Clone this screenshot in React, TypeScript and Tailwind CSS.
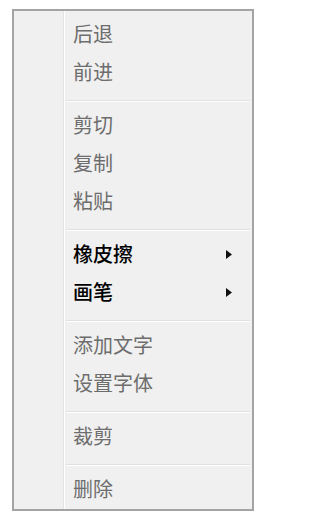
import React from "react"

type Entry =
  | { kind: "item"; label: string; disabled?: boolean; submenu?: boolean }
  | { kind: "sep" }

const entries: Entry[] = [
  { kind: "item", label: "后退", disabled: true },
  { kind: "item", label: "前进", disabled: true },
  { kind: "sep" },
  { kind: "item", label: "剪切", disabled: true },
  { kind: "item", label: "复制", disabled: true },
  { kind: "item", label: "粘贴", disabled: true },
  { kind: "sep" },
  { kind: "item", label: "橡皮擦", submenu: true },
  { kind: "item", label: "画笔", submenu: true },
  { kind: "sep" },
  { kind: "item", label: "添加文字", disabled: true },
  { kind: "item", label: "设置字体", disabled: true },
  { kind: "sep" },
  { kind: "item", label: "裁剪", disabled: true },
  { kind: "sep" },
  { kind: "item", label: "删除", disabled: true },
]

function Arrow() {
  return (
    <svg width="6" height="9" viewBox="0 0 6 9" className="block">
      <path d="M0 0 L6 4.5 L0 9 Z" fill="#111" />
    </svg>
  )
}

export default function App() {
  return (
    <div
      className="w-[263px] h-[517px] bg-white pt-[9px] pl-[12px]"
      style={{ fontFamily: '"Noto Sans CJK SC", "Noto Sans", sans-serif' }}
    >
      <div className="w-[242px] h-[502px] border-2 border-[#a4a4a4] bg-[#f0f0f0] flex">
        {/* icon gutter */}
        <div className="w-[49px] shrink-0" />
        <div className="w-px bg-[#e2e3e3] shrink-0" />
        <div className="w-px bg-white shrink-0" />

        <div className="flex-1 flex flex-col pt-[4px]">
          {entries.map((e, i) =>
            e.kind === "sep" ? (
              <div key={i} className="h-[15px] pt-[9px] pl-[1px] pr-[2px]">
                <div className="h-px bg-[#e0e0e0]" />
                <div className="h-px bg-white" />
              </div>
            ) : (
              <div
                key={i}
                className="h-[38px] flex items-center justify-between pl-[8px] pr-[20px]"
              >
                <span
                  className={
                    e.disabled
                      ? "text-[20px] leading-none text-[#6d6d6d]"
                      : "text-[20px] leading-none text-black font-medium"
                  }
                >
                  {e.label}
                </span>
                {e.submenu && <Arrow />}
              </div>
            )
          )}
        </div>
      </div>
    </div>
  )
}
